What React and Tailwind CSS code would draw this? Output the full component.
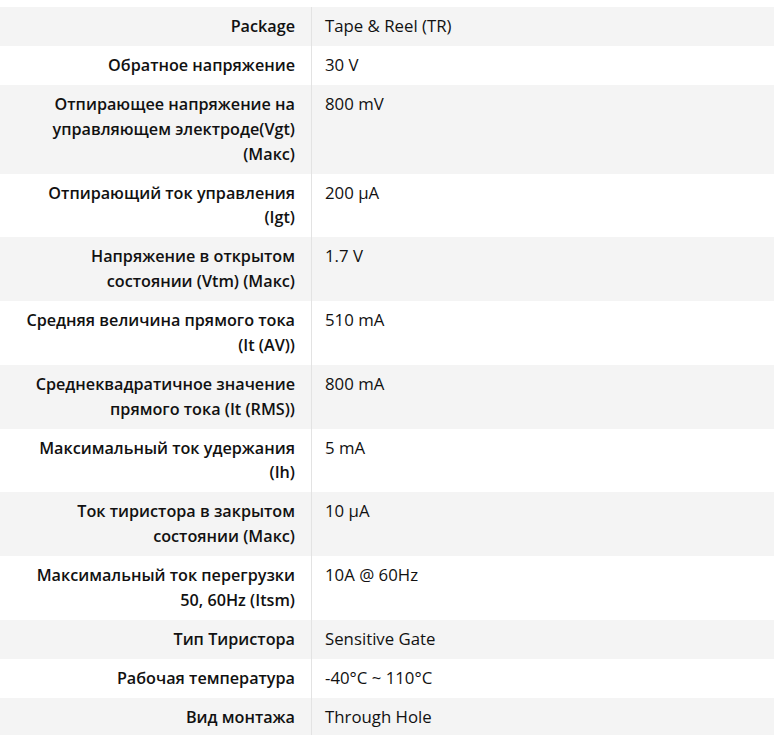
import React from "react";

const rows = [
  { label: ["Package"], value: "Tape & Reel (TR)" },
  { label: ["Обратное напряжение"], value: "30 V" },
  { label: ["Отпирающее напряжение на", "управляющем электроде(Vgt)", "(Макс)"], value: "800 mV" },
  { label: ["Отпирающий ток управления", "(Igt)"], value: "200 µA" },
  { label: ["Напряжение в открытом", "состоянии (Vtm) (Макс)"], value: "1.7 V" },
  { label: ["Средняя величина прямого тока", "(It (AV))"], value: "510 mA" },
  { label: ["Среднеквадратичное значение", "прямого тока (It (RMS))"], value: "800 mA" },
  { label: ["Максимальный ток удержания", "(Ih)"], value: "5 mA" },
  { label: ["Ток тиристора в закрытом", "состоянии (Макс)"], value: "10 µA" },
  { label: ["Максимальный ток перегрузки", "50, 60Hz (Itsm)"], value: "10A @ 60Hz" },
  { label: ["Тип Тиристора"], value: "Sensitive Gate" },
  { label: ["Рабочая температура"], value: "-40°C ~ 110°C" },
  { label: ["Вид монтажа"], value: "Through Hole" },
];

const App = () => {
  return (
    <div className="bg-white pt-[7px] font-['Open_Sans',sans-serif] leading-[24.75px] text-[#111111]">
      {rows.map((row, i) => (
        <div key={i} className={`flex ${i % 2 === 0 ? "bg-[#f4f4f4]" : "bg-white"}`}>
          <div className="w-[312px] shrink-0 border-r border-[#e3e3e3] py-[7.125px] pr-4 text-right text-[16.2px] font-semibold whitespace-nowrap">
            {row.label.map((line, j) => (
              <div key={j}>{line}</div>
            ))}
          </div>
          <div className="flex-1 py-[7.125px] pl-[13px] text-[16.8px]">{row.value}</div>
        </div>
      ))}
    </div>
  );
};

export default App;
